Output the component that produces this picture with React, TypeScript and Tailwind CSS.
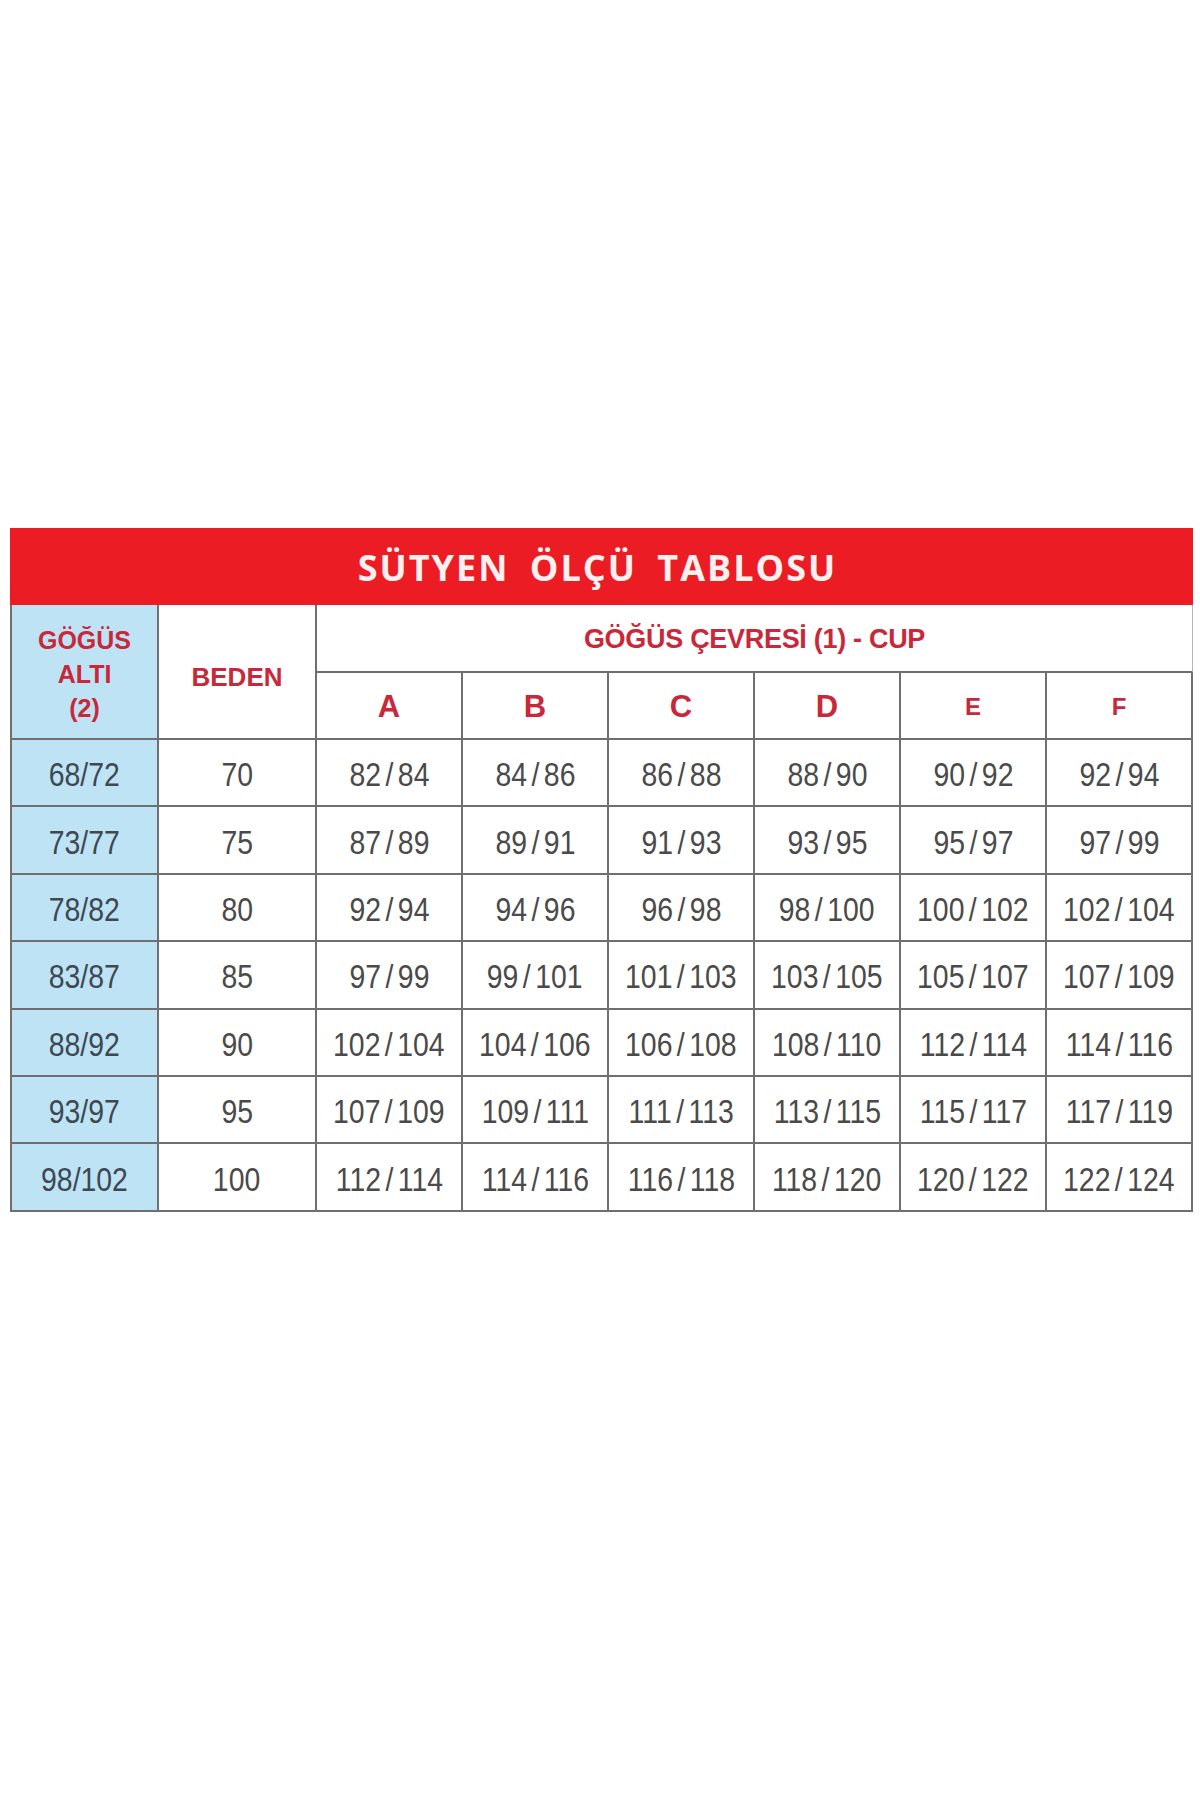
import React from "react";

const rows: [string, string, string[]][] = [
  ["68/72", "70", ["82 / 84", "84 / 86", "86 / 88", "88 / 90", "90 / 92", "92 / 94"]],
  ["73/77", "75", ["87 / 89", "89 / 91", "91 / 93", "93 / 95", "95 / 97", "97 / 99"]],
  ["78/82", "80", ["92 / 94", "94 / 96", "96 / 98", "98 / 100", "100 / 102", "102 / 104"]],
  ["83/87", "85", ["97 / 99", "99 / 101", "101 / 103", "103 / 105", "105 / 107", "107 / 109"]],
  ["88/92", "90", ["102 / 104", "104 / 106", "106 / 108", "108 / 110", "112 / 114", "114 / 116"]],
  ["93/97", "95", ["107 / 109", "109 / 111", "111 / 113", "113 / 115", "115 / 117", "117 / 119"]],
  ["98/102", "100", ["112 / 114", "114 / 116", "116 / 118", "118 / 120", "120 / 122", "122 / 124"]],
];

const cups = ["A", "B", "C", "D", "E", "F"];

function Num({ children, dark }: { children: React.ReactNode; dark?: boolean }) {
  return (
    <span
      className={`inline-block text-[33px] leading-none [transform:scaleX(0.86)] [word-spacing:-4px] whitespace-nowrap pt-[4px] ${
        dark ? "text-[#3d4852]" : "text-[#4a4a4a]"
      }`}
    >
      {children}
    </span>
  );
}

export default function App() {
  return (
    <div
      className="w-[1200px] h-[1800px] bg-white pt-[528px] pl-[10px]"
      style={{ fontFamily: '"Liberation Sans", Arial, sans-serif' }}
    >
      <div className="w-[1183px]">
        <div className="h-[77px] bg-[#ec1c24] flex items-center justify-center pr-[8px]">
          <span
            className="text-[36px] font-bold text-[#fff0f0] tracking-[2px] [word-spacing:9px] pt-[2px]"
            style={{ fontFamily: '"Open Sans", "Liberation Sans", sans-serif' }}
          >
            SÜTYEN ÖLÇÜ TABLOSU
          </span>
        </div>
        <div className="grid grid-cols-[147px_158px_repeat(6,1fr)] grid-rows-[68px_67px_repeat(7,67.4px)] border-l-2 border-[#6f6f6f]">
          <div className="row-span-2 bg-[#bde3f5] border-r-2 border-b-2 border-[#6f6f6f] flex flex-col items-center justify-center text-[#c9283a] font-bold text-[25px] leading-[34px] pt-[4px]">
            <span>GÖĞÜS</span>
            <span>ALTI</span>
            <span>(2)</span>
          </div>
          <div className="row-span-2 border-r-2 border-b-2 border-[#6f6f6f] flex items-center justify-center text-[#c9283a] font-bold text-[26px] pt-[12px]">
            BEDEN
          </div>
          <div className="col-span-6 border-b-2 border-r border-[#6f6f6f] border-r-[#b5b5b5] flex items-center justify-center text-[#c9283a] font-bold text-[27px] tracking-[-0.3px] pt-[2px]">
            GÖĞÜS ÇEVRESİ (1) - CUP
          </div>
          {cups.map((c, i) => (
            <div
              key={c}
              className={`border-r-2 border-b-2 border-[#6f6f6f] flex items-center justify-center text-[#c9283a] font-bold pt-[3px] ${
                i >= 4 ? "text-[24px]" : "text-[31px]"
              }`}
            >
              {c}
            </div>
          ))}
          {rows.map(([alt, beden, vals]) => (
            <React.Fragment key={alt}>
              <div className="bg-[#bde3f5] border-r-2 border-b-2 border-[#6f6f6f] flex items-center justify-center">
                <Num dark>{alt}</Num>
              </div>
              <div className="border-r-2 border-b-2 border-[#6f6f6f] flex items-center justify-center">
                <Num>{beden}</Num>
              </div>
              {vals.map((v, j) => (
                <div
                  key={j}
                  className="border-r-2 border-b-2 border-[#6f6f6f] flex items-center justify-center"
                >
                  <Num>{v}</Num>
                </div>
              ))}
            </React.Fragment>
          ))}
        </div>
      </div>
    </div>
  );
}
